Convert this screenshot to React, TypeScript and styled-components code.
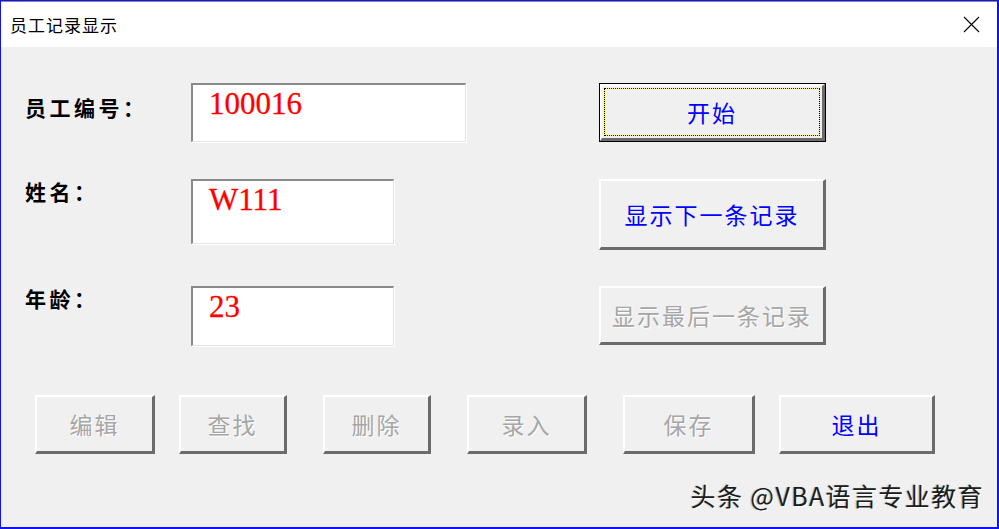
import React from "react";
import styled, { createGlobalStyle } from "styled-components";

const GlobalStyle = createGlobalStyle`
  html, body {
    margin: 0;
    padding: 0;
    background: #f0f0f0;
  }
  * {
    box-sizing: border-box;
  }
`;

const CJK = `"Noto Sans CJK SC", "Noto Sans", sans-serif`;

const Window = styled.div`
  width: 999px;
  height: 529px;
  display: flex;
  flex-direction: column;
  border-left: 1px solid #1010ff;
  border-top: 1px solid #1010ff;
  border-right: 2px solid #1010ff;
  border-bottom: 2px solid #1010ff;
  background: #f0f0f0;
  position: relative;
  overflow: hidden;
`;

const TitleBar = styled.div`
  height: 46px;
  flex: none;
  display: flex;
  align-items: center;
  justify-content: space-between;
  background: #fff;
  border-top: 1px solid #8a8a8a;
  padding: 0 17px 0 9px;
`;

const TitleText = styled.div`
  font-family: ${CJK};
  font-size: 17px;
  letter-spacing: 1px;
  color: #000;
`;

const CloseIcon = styled.svg`
  width: 17px;
  height: 17px;
  display: block;
`;

const Body = styled.div`
  flex: 1;
  display: flex;
  flex-direction: column;
  padding: 36px 0 0 0;
`;

const Form = styled.div`
  display: grid;
  grid-template-columns: 166px 408px 227px;
  grid-template-rows: 59px 70px 59px;
  row-gap: 37px;
  padding-left: 24px;
`;

const Label = styled.div<{ $top: number }>`
  font-family: ${CJK};
  font-weight: 700;
  font-size: 21px;
  line-height: 1;
  letter-spacing: 3.5px;
  color: #000;
  padding-top: ${(p) => p.$top}px;
`;

const TextBox = styled.div<{ $w: number; $h: number }>`
  width: ${(p) => p.$w}px;
  height: ${(p) => p.$h}px;
  background: #fff;
  border-style: solid;
  border-width: 2px 1px 1px 2px;
  border-color: #8a8a8a #e3e3e3 #e3e3e3 #8a8a8a;
  box-shadow: 1px 1px 0 #fff;
  padding: 3px 0 0 16px;
  font-family: "Liberation Serif", "Times New Roman", serif;
  font-size: 31px;
  line-height: 1;
  color: #ff0000;
  -webkit-text-stroke: 0.3px #ff0000;
`;

const Button = styled.div<{ $w: number; $h?: number; $tone: "blue" | "gray"; $ml?: number }>`
  width: ${(p) => p.$w}px;
  height: ${(p) => p.$h ?? 59}px;
  margin-left: ${(p) => p.$ml ?? 0}px;
  flex: none;
  display: flex;
  align-items: center;
  justify-content: center;
  background: #f0f0f0;
  border-style: solid;
  border-width: 2px 3px 3px 2px;
  border-color: #fff #6b6b6b #6b6b6b #fff;
  font-family: ${CJK};
  font-size: 23px;
  letter-spacing: 2px;
  color: ${(p) => (p.$tone === "blue" ? "#0000ff" : "#a6a6a6")};
  text-shadow: ${(p) => (p.$tone === "gray" ? "1px 1px 0 #fff" : "none")};
`;

const DefaultButton = styled.div`
  width: 227px;
  height: 59px;
  border: 1px solid #000;
  display: flex;
  background: #f0f0f0;
`;

const DefaultInner = styled.div`
  flex: 1;
  display: flex;
  border-style: solid;
  border-width: 2px 3px 3px 2px;
  border-color: #fff #6b6b6b #6b6b6b #fff;
  padding: 2px;
`;

const FocusRect = styled.div`
  flex: 1;
  display: flex;
  align-items: center;
  justify-content: center;
  border: 1px dotted #000;
  background: linear-gradient(#f0f0f0, #f0f0f0) padding-box, #ffff00 border-box;
  font-family: ${CJK};
  font-size: 23px;
  letter-spacing: 2px;
  color: #0000ff;
`;

const ButtonRow = styled.div`
  display: flex;
  margin-top: 50px;
  padding-left: 34px;
`;

const Watermark = styled.div`
  position: absolute;
  right: 13px;
  bottom: 14px;
  font-family: ${CJK};
  font-size: 25px;
  letter-spacing: 1.4px;
  color: #1c1c1c;
  text-shadow: 1px 1px 0 #fff, -1px 0 1px rgba(0, 0, 0, 0.25);
`;

const bottomButtons: { text: string; w: number; ml: number; tone: "blue" | "gray" }[] = [
  { text: "编辑", w: 120, ml: 0, tone: "gray" },
  { text: "查找", w: 108, ml: 24, tone: "gray" },
  { text: "删除", w: 108, ml: 36, tone: "gray" },
  { text: "录入", w: 120, ml: 36, tone: "gray" },
  { text: "保存", w: 132, ml: 36, tone: "gray" },
  { text: "退出", w: 156, ml: 24, tone: "blue" },
];

export default function App() {
  return (
    <>
      <GlobalStyle />
      <Window>
        <TitleBar>
          <TitleText>员工记录显示</TitleText>
          <CloseIcon viewBox="0 0 17 17">
            <path d="M1 1 L16 16 M16 1 L1 16" stroke="#000" strokeWidth="1.1" />
          </CloseIcon>
        </TitleBar>
        <Body>
          <Form>
            <Label $top={14}>员工编号：</Label>
            <TextBox $w={275} $h={59}>100016</TextBox>
            <DefaultButton>
              <DefaultInner>
                <FocusRect>开始</FocusRect>
              </DefaultInner>
            </DefaultButton>

            <Label $top={2}>姓名：</Label>
            <TextBox $w={203} $h={65}>W111</TextBox>
            <Button $w={227} $h={71} $tone="blue">显示下一条记录</Button>

            <Label $top={2}>年龄：</Label>
            <TextBox $w={203} $h={60}>23</TextBox>
            <Button $w={227} $tone="gray">显示最后一条记录</Button>
          </Form>
          <ButtonRow>
            {bottomButtons.map((b) => (
              <Button key={b.text} $w={b.w} $ml={b.ml} $tone={b.tone}>
                {b.text}
              </Button>
            ))}
          </ButtonRow>
        </Body>
        <Watermark>头条 @VBA语言专业教育</Watermark>
      </Window>
    </>
  );
}
